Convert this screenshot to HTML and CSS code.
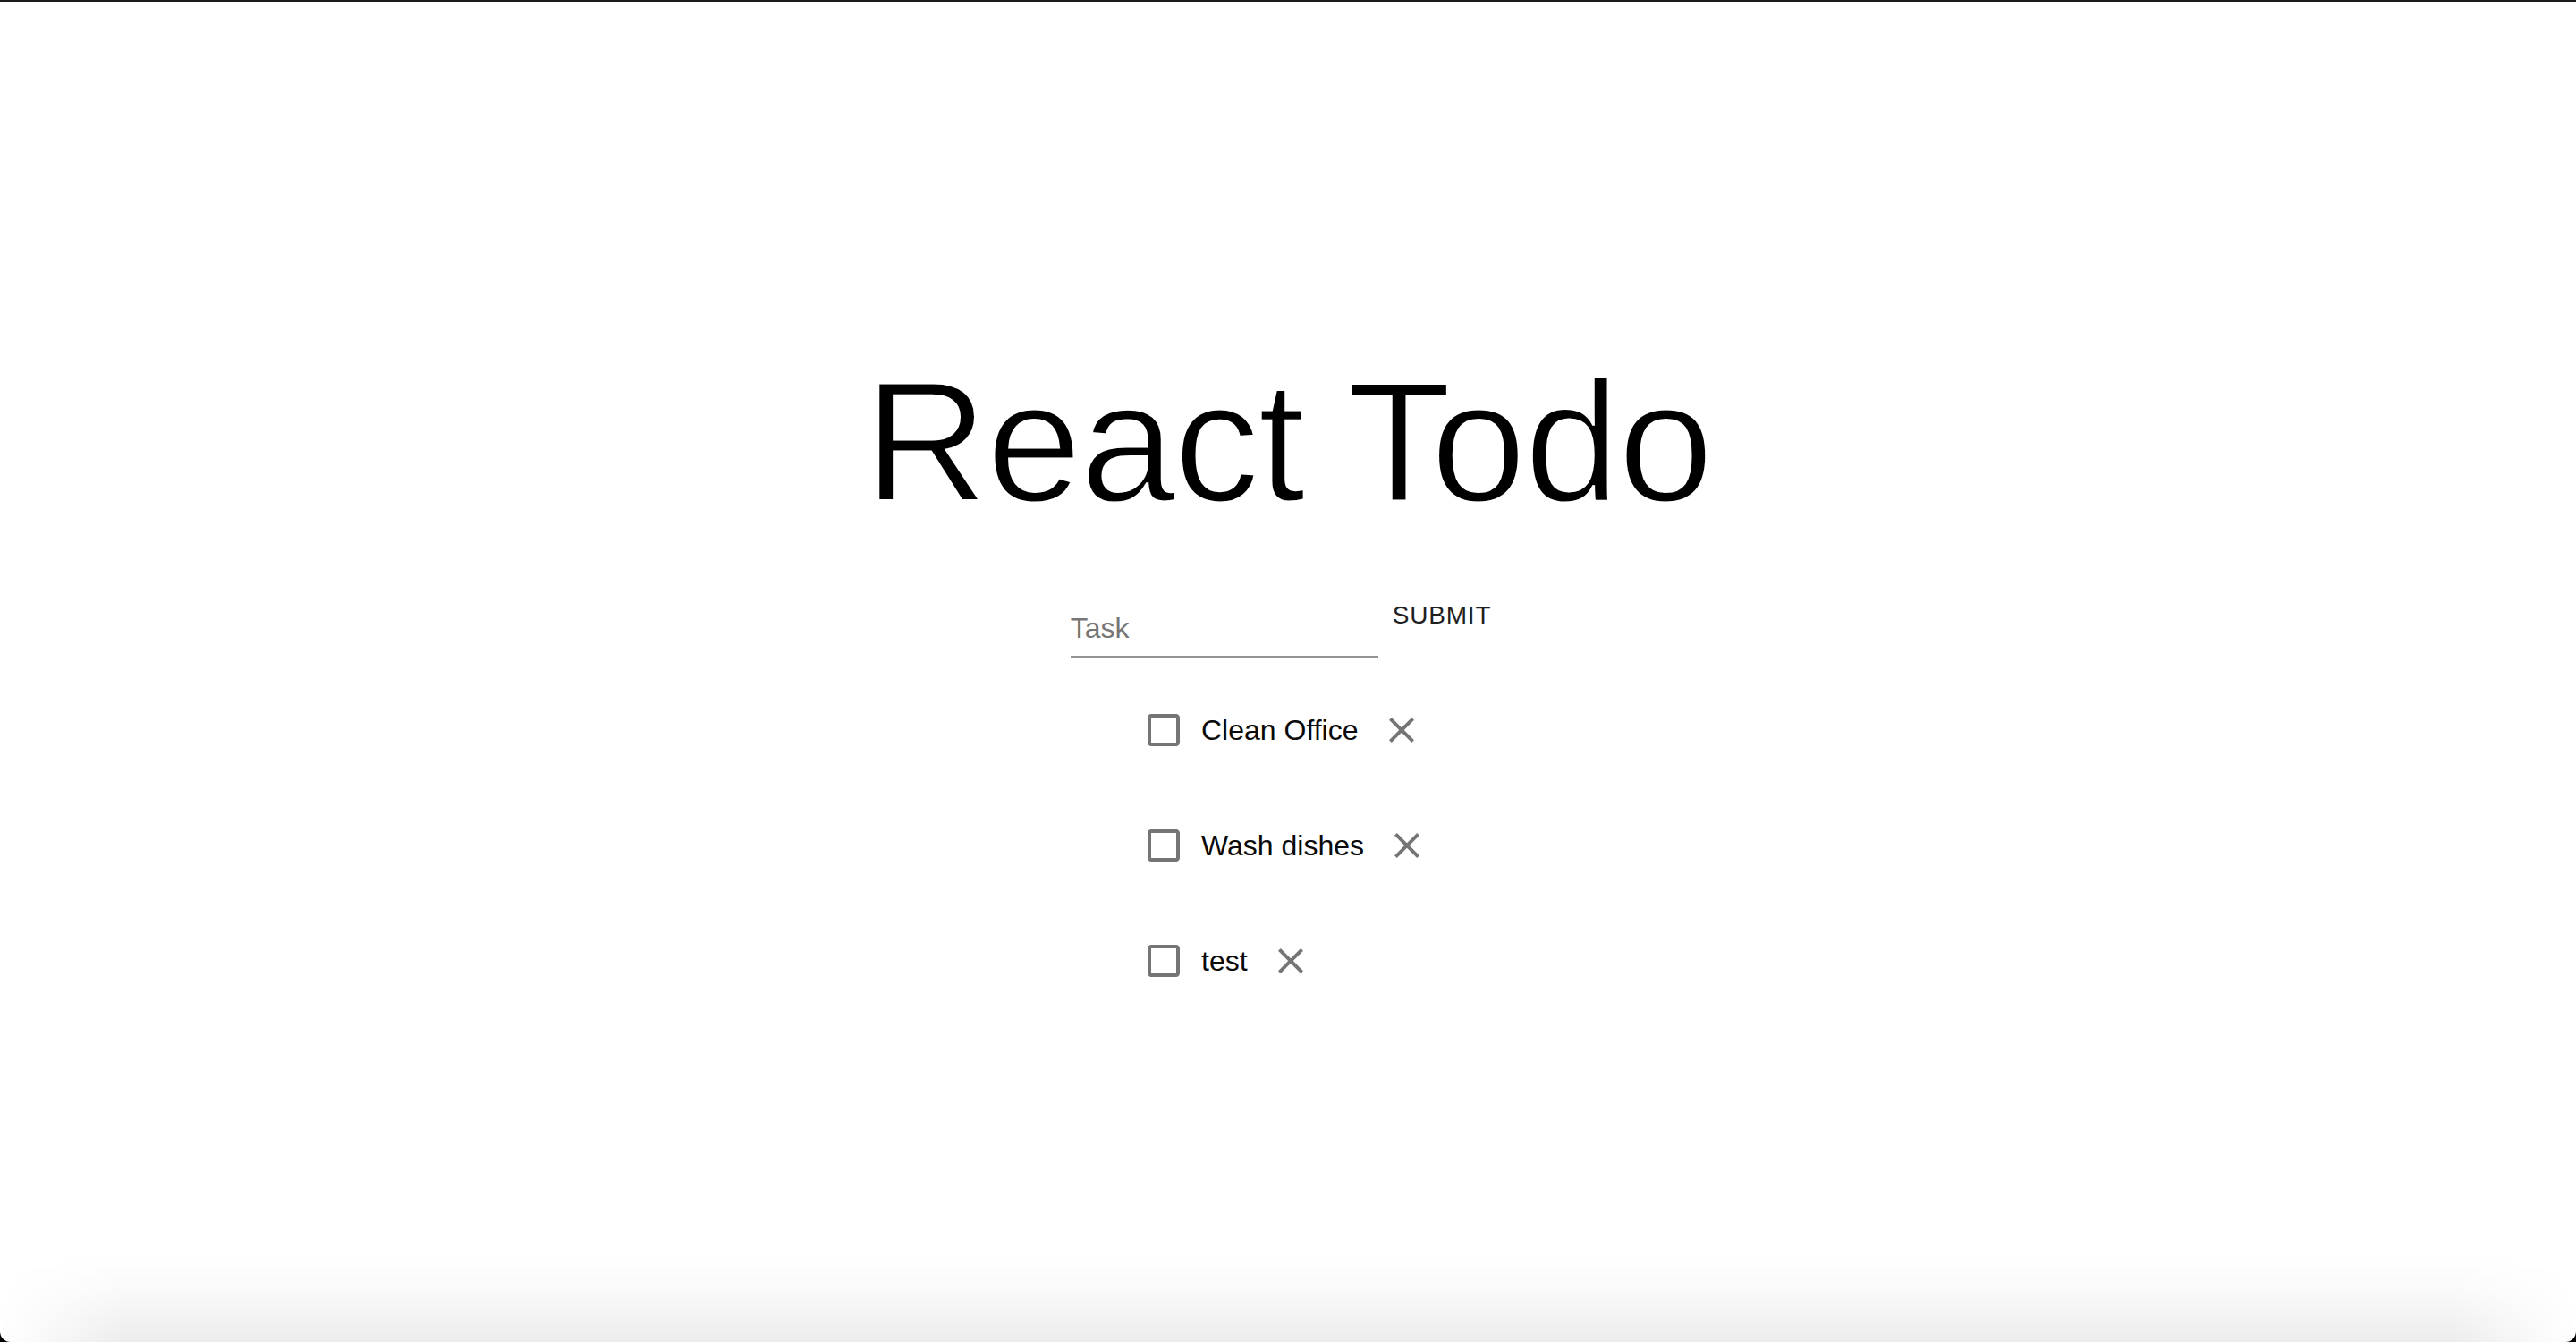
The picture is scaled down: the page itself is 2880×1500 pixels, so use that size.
FILE: index.html
```html
<!DOCTYPE html>
<html lang="en">
<head>
<meta charset="utf-8">
<title>React Todo</title>
<link rel="stylesheet" href="styles.css">
</head>
<body>
<div class="window">
  <main class="app">
    <h1 class="title">React Todo</h1>
    <form class="todo-form">
      <div class="field">
        <input class="field-input" type="text" placeholder="Task">
      </div>
      <button class="submit" type="button">SUBMIT</button>
    </form>
    <ul class="todo-list">
      <li class="todo">
        <span class="check"><svg viewBox="0 0 24 24" class="icon"><path d="M19 5v14H5V5h14m0-2H5c-1.11 0-2 .9-2 2v14c0 1.1.89 2 2 2h14c1.1 0 2-.9 2-2V5c0-1.1-.9-2-2-2z"/></svg></span>
        <span class="todo-text">Clean Office</span>
        <span class="remove"><svg viewBox="0 0 24 24" class="icon"><path d="M19 6.41L17.59 5 12 10.59 6.41 5 5 6.41 10.59 12 5 17.590 6.41 19 12 13.41 17.59 19 19 17.59 13.41 12z"/></svg></span>
      </li>
      <li class="todo">
        <span class="check"><svg viewBox="0 0 24 24" class="icon"><path d="M19 5v14H5V5h14m0-2H5c-1.11 0-2 .9-2 2v14c0 1.1.89 2 2 2h14c1.1 0 2-.9 2-2V5c0-1.1-.9-2-2-2z"/></svg></span>
        <span class="todo-text">Wash dishes</span>
        <span class="remove"><svg viewBox="0 0 24 24" class="icon"><path d="M19 6.41L17.59 5 12 10.59 6.41 5 5 6.41 10.59 12 5 17.59 6.41 19 12 13.41 17.59 19 19 17.59 13.41 12z"/></svg></span>
      </li>
      <li class="todo">
        <span class="check"><svg viewBox="0 0 24 24" class="icon"><path d="M19 5v14H5V5h14m0-2H5c-1.11 0-2 .9-2 2v14c0 1.1.89 2 2 2h14c1.1 0 2-.9 2-2V5c0-1.1-.9-2-2-2z"/></svg></span>
        <span class="todo-text">test</span>
        <span class="remove"><svg viewBox="0 0 24 24" class="icon"><path d="M19 6.41L17.59 5 12 10.59 6.41 5 5 6.41 10.59 12 5 17.59 6.41 19 12 13.41 17.59 19 19 17.59 13.41 12z"/></svg></span>
      </li>
    </ul>
  </main>
  <div class="bottom-shade"></div>
</div>
</body>
</html>
```
FILE: styles.css
```css
html, body {
  margin: 0;
  padding: 0;
  background: #000;
}

.window {
  position: relative;
  box-sizing: border-box;
  height: 1500px;
  background: #fff;
  border-top: 2px solid #1b1b1b;
  border-radius: 0 0 12px 12px;
  overflow: hidden;
  font-family: "Liberation Sans", Arial, sans-serif;
}

.app {
  padding-top: 380px;
  display: flex;
  flex-direction: column;
  align-items: center;
}

.title {
  margin: 0;
  font-size: 192px;
  line-height: 224px;
  font-weight: 400;
  letter-spacing: -2px;
  color: #000;
  -webkit-text-stroke: 3px #fff;
  paint-order: fill stroke;
}

.todo-form {
  margin-top: 45px;
  display: flex;
  align-items: flex-start;
}

.field {
  margin-top: 20px;
  width: 344px;
  padding: 12px 0;
  border-bottom: 2px solid #949494;
}

.field-input {
  display: block;
  width: 100%;
  height: 38px;
  padding: 0;
  border: none;
  outline: none;
  background: transparent;
  font-family: "Liberation Sans", Arial, sans-serif;
  font-size: 32px;
  color: #222;
}

.field-input::placeholder {
  color: #767676;
  opacity: 1;
}

.submit {
  padding: 12px 16px;
  min-width: 128px;
  border: none;
  background: transparent;
  font-family: "Liberation Sans", Arial, sans-serif;
  font-size: 28px;
  line-height: 49px;
  letter-spacing: 0.8px;
  color: #1f1f1f;
}

.todo-list {
  list-style: none;
  margin: 33px 0 0;
  padding: 0;
  display: flex;
  flex-direction: column;
  align-items: flex-start;
  gap: 33px;
}

.todo {
  display: flex;
  align-items: center;
  height: 96px;
}

.check {
  display: flex;
  padding: 18px;
}

.remove {
  display: flex;
  padding: 24px;
}

.icon {
  width: 48px;
  height: 48px;
  fill: #757575;
}

.todo-text {
  font-size: 32px;
  line-height: 48px;
  color: #0a0a0a;
}

.bottom-shade {
  position: absolute;
  left: 0;
  right: 0;
  bottom: 0;
  height: 92px;
  background: linear-gradient(to bottom, rgba(0,0,0,0) 0%, rgba(0,0,0,0.025) 40%, rgba(0,0,0,0.075) 100%);
  -webkit-mask-image: linear-gradient(to right, transparent 0, #000 140px, #000 calc(100% - 140px), transparent 100%);
  mask-image: linear-gradient(to right, transparent 0, #000 140px, #000 calc(100% - 140px), transparent 100%);
  pointer-events: none;
}
```
